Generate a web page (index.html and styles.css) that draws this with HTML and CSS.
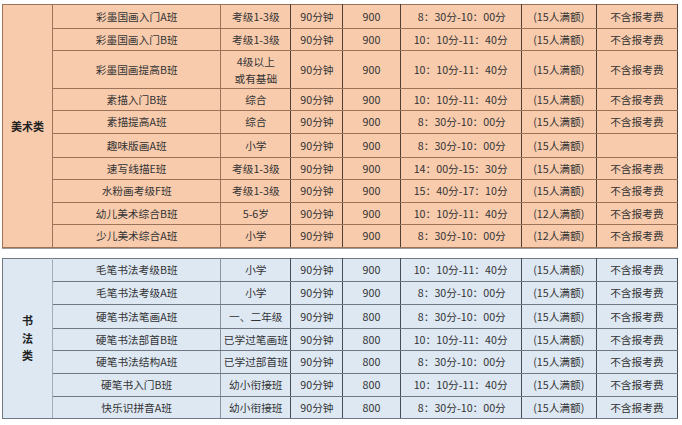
FILE: index.html
```html
<!DOCTYPE html>
<html lang="zh">
<head>
<meta charset="utf-8">
<link rel="stylesheet" href="styles.css">
</head>
<body>
<div class="page">
  <table class="sched art">
    <colgroup>
      <col class="c-cat"><col class="c-name"><col class="c-lvl"><col class="c-dur"><col class="c-price"><col class="c-time"><col class="c-cap"><col class="c-note">
    </colgroup>
    <tr class="r24">
      <th rowspan="10" class="cat">美术类</th>
      <td class="name">彩墨国画入门A班</td><td>考级1-3级</td><td>90分钟</td><td>900</td><td class="time">&nbsp;8：30分-10：00分</td><td>(15人满额)</td><td>不含报考费</td>
    </tr>
    <tr class="r22">
      <td class="name">彩墨国画入门B班</td><td>考级1-3级</td><td>90分钟</td><td>900</td><td class="time">10：10分-11：40分</td><td>(15人满额)</td><td>不含报考费</td>
    </tr>
    <tr class="r38">
      <td class="name">彩墨国画提高B班</td><td class="two">4级以上<br>或有基础</td><td>90分钟</td><td>900</td><td class="time">10：10分-11：40分</td><td>(15人满额)</td><td>不含报考费</td>
    </tr>
    <tr class="r22">
      <td class="name">素描入门B班</td><td>综合</td><td>90分钟</td><td>900</td><td class="time">10：10分-11：40分</td><td>(15人满额)</td><td>不含报考费</td>
    </tr>
    <tr class="r23">
      <td class="name">素描提高A班</td><td>综合</td><td>90分钟</td><td>900</td><td class="time">&nbsp;8：30分-10：00分</td><td>(15人满额)</td><td>不含报考费</td>
    </tr>
    <tr class="r24">
      <td class="name">趣味版画A班</td><td>小学</td><td>90分钟</td><td>900</td><td class="time">&nbsp;8：30分-10：00分</td><td>(15人满额)</td><td></td>
    </tr>
    <tr class="r22">
      <td class="name">速写线描E班</td><td>考级1-3级</td><td>90分钟</td><td>900</td><td class="time">14：00分-15：30分</td><td>(15人满额)</td><td>不含报考费</td>
    </tr>
    <tr class="r23">
      <td class="name">水粉画考级F班</td><td>考级1-3级</td><td>90分钟</td><td>900</td><td class="time">15：40分-17：10分</td><td>(15人满额)</td><td>不含报考费</td>
    </tr>
    <tr class="r22">
      <td class="name">幼儿美术综合B班</td><td>5-6岁</td><td>90分钟</td><td>900</td><td class="time">10：10分-11：40分</td><td>(12人满额)</td><td>不含报考费</td>
    </tr>
    <tr class="r23">
      <td class="name">少儿美术综合A班</td><td>小学</td><td>90分钟</td><td>900</td><td class="time">&nbsp;8：30分-10：00分</td><td>(12人满额)</td><td>不含报考费</td>
    </tr>
  </table>

  <table class="sched calli">
    <colgroup>
      <col class="c-cat"><col class="c-name"><col class="c-lvl"><col class="c-dur"><col class="c-price"><col class="c-time"><col class="c-cap"><col class="c-note">
    </colgroup>
    <tr class="r23">
      <th rowspan="7" class="cat"><span>书</span><span>法</span><span>类</span></th>
      <td class="name">毛笔书法考级B班</td><td>小学</td><td>90分钟</td><td>900</td><td class="time">10：10分-11：40分</td><td>(15人满额)</td><td>不含报考费</td>
    </tr>
    <tr class="r23">
      <td class="name">毛笔书法考级A班</td><td>小学</td><td>90分钟</td><td>900</td><td class="time">&nbsp;8：30分-10：00分</td><td>(15人满额)</td><td>不含报考费</td>
    </tr>
    <tr class="r24">
      <td class="name">硬笔书法笔画A班</td><td>一、二年级</td><td>90分钟</td><td>800</td><td class="time">&nbsp;8：30分-10：00分</td><td>(15人满额)</td><td>不含报考费</td>
    </tr>
    <tr class="r22">
      <td class="name">硬笔书法部首B班</td><td>已学过笔画班</td><td>90分钟</td><td>800</td><td class="time">10：10分-11：40分</td><td>(15人满额)</td><td>不含报考费</td>
    </tr>
    <tr class="r23">
      <td class="name">硬笔书法结构A班</td><td>已学过部首班</td><td>90分钟</td><td>800</td><td class="time">&nbsp;8：30分-10：00分</td><td>(15人满额)</td><td>不含报考费</td>
    </tr>
    <tr class="r23">
      <td class="name">硬笔书入门B班</td><td>幼小衔接班</td><td>90分钟</td><td>800</td><td class="time">10：10分-11：40分</td><td>(15人满额)</td><td>不含报考费</td>
    </tr>
    <tr class="r22">
      <td class="name">快乐识拼音A班</td><td>幼小衔接班</td><td>90分钟</td><td>800</td><td class="time">&nbsp;8：30分-10：00分</td><td>(15人满额)</td><td>不含报考费</td>
    </tr>
  </table>
</div>
</body>
</html>
```

FILE: styles.css
```css
html, body {
  margin: 0;
  padding: 0;
  background: #ffffff;
}

.page {
  padding: 4px 0 0 2px;
  display: flex;
  flex-direction: column;
  gap: 10px;
}

.sched {
  border-collapse: collapse;
  table-layout: fixed;
  width: 676px;
  font-family: "Noto Sans CJK SC", "Microsoft YaHei", sans-serif;
  font-size: 10.7px;
  color: #333333;
  border: 1px solid #2e2a28;
  box-shadow: 0 1px 0 #9a9a9a;
}

.c-cat { width: 50px; }
.c-name { width: 168px; }
.c-lvl { width: 70px; }
.c-dur { width: 52px; }
.c-price { width: 57px; }
.c-time { width: 121px; }
.c-cap { width: 75px; }
.c-note { width: 81px; }

.sched td,
.sched th {
  padding: 0;
  text-align: center;
  vertical-align: middle;
  line-height: 14px;
  white-space: nowrap;
  overflow: hidden;
}

.sched .cat {
  font-weight: bold;
  font-size: 11px;
  color: #222;
}

.sched .two {
  line-height: 17px;
}

.sched .time {
  white-space: pre;
}

.r22 { height: 22px; }
.r23 { height: 23px; }
.r24 { height: 24px; }
.r38 { height: 38px; }

/* art table (peach) */
.art td, .art th {
  background: #f8cbad;
  border: 1px solid #9c7358;
  border-right-color: #4f3e33;
}
.art th.cat,
.art td.name {
  border-right-color: #9c7358;
}

/* calligraphy table (light blue) */
.calli td, .calli th {
  background: #dde8f3;
  border: 1px solid #6f7883;
  border-right-color: #454d55;
}
.calli th.cat {
  border-right-color: #a3adb7;
}
.calli td.name {
  border-right-color: #8a949e;
}

.calli .cat span {
  display: block;
  line-height: 17.5px;
}
```
